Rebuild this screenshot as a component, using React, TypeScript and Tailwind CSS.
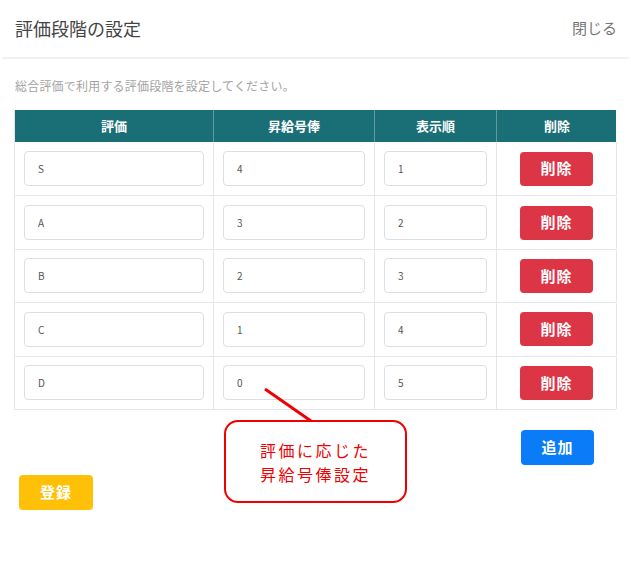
import React from "react";

type Row = { grade: string; step: string; order: string };

const rows: Row[] = [
  { grade: "S", step: "4", order: "1" },
  { grade: "A", step: "3", order: "2" },
  { grade: "B", step: "2", order: "3" },
  { grade: "C", step: "1", order: "4" },
  { grade: "D", step: "0", order: "5" },
];

const font = {
  fontFamily: '"Noto Sans CJK JP", "Noto Sans", sans-serif',
};

function Field({ value }: { value: string }) {
  return (
    <input
      readOnly
      value={value}
      className="h-[35px] w-full rounded-[4px] border border-[#dbdfe4] bg-white pl-[13px] text-[10px] text-[#555] outline-none"
    />
  );
}

export default function App() {
  return (
    <div className="relative h-[568px] w-[631px] bg-white" style={font}>
      <div className="flex h-[57px] items-center justify-between pl-[15px] pr-[14px]">
        <h1 className="text-[18px] font-normal text-[#444]">評価段階の設定</h1>
        <button type="button" className="text-[15px] text-[#777]">
          閉じる
        </button>
      </div>
      <div className="mx-[2px] h-[2px] bg-[#eff1f3]" />

      <p className="pl-[15px] pt-[19px] text-[12px] leading-[16px] tracking-[0.2px] text-[#a3a3a3]">
        総合評価で利用する評価段階を設定してください。
      </p>

      <div className="ml-[14px] mt-[16px] w-[602px] border-b border-l border-[#e3e6ea]">
        <div className="grid h-[32px] grid-cols-[199px_161px_122px_120px] bg-[#1a6e76] text-[13px] font-bold text-white">
          <div className="flex items-center justify-center border-r border-[#5f9ba1]">評価</div>
          <div className="flex items-center justify-center border-r border-[#5f9ba1]">昇給号俸</div>
          <div className="flex items-center justify-center border-r border-[#5f9ba1]">表示順</div>
          <div className="flex items-center justify-center">削除</div>
        </div>
        {rows.map((r, i) => (
          <div
            key={r.grade}
            className={
              "grid h-[53.4px] grid-cols-[199px_161px_122px_120px] " +
              (i > 0 ? "border-t border-[#e3e6ea]" : "")
            }
          >
            <div className="flex items-center border-r border-[#e3e6ea] pl-[9px] pr-[9px]">
              <Field value={r.grade} />
            </div>
            <div className="flex items-center border-r border-[#e3e6ea] pl-[9px] pr-[9px]">
              <Field value={r.step} />
            </div>
            <div className="flex items-center border-r border-[#e3e6ea] pl-[9px] pr-[9px]">
              <Field value={r.order} />
            </div>
            <div className="flex items-center justify-center border-r border-[#e3e6ea]">
              <button
                type="button"
                className="h-[34px] w-[73px] rounded-[4px] bg-[#dc3545] text-[15px] font-bold tracking-[1px] text-white"
              >
                削除
              </button>
            </div>
          </div>
        ))}
      </div>

      <div className="mt-[20px] flex justify-end pr-[37px]">
        <button
          type="button"
          className="h-[35px] w-[73px] rounded-[4px] bg-[#0a7cf7] text-[15px] font-bold tracking-[1px] text-white"
        >
          追加
        </button>
      </div>
      <div className="mt-[10px] pl-[19px]">
        <button
          type="button"
          className="h-[35px] w-[74px] rounded-[4px] bg-[#ffc107] text-[15px] font-bold tracking-[1px] text-white"
        >
          登録
        </button>
      </div>

      {/* annotation callout */}
      <svg className="absolute left-0 top-0" width="631" height="568" style={{ pointerEvents: "none" }}>
        <line x1="265" y1="389" x2="311" y2="421" stroke="#f00000" strokeWidth="3" />
      </svg>
      <div className="absolute left-[224px] top-[420px] flex h-[83px] w-[183px] flex-col items-center justify-center rounded-[14px] border-[2.5px] border-[#f00000] bg-white text-[16px] leading-[24px] tracking-[2.5px] text-[#f00000]">
        <span>評価に応じた</span>
        <span>昇給号俸設定</span>
      </div>
    </div>
  );
}
